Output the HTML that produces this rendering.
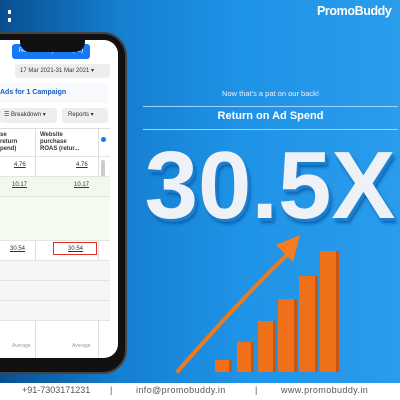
<!DOCTYPE html>
<html><head><style>
*{margin:0;padding:0;box-sizing:border-box}
body{width:400px;height:400px;overflow:hidden;position:relative;font-family:"Liberation Sans",sans-serif;background:linear-gradient(90deg,#0a4f8f 0%,#157fd0 30%,#1f93e6 60%,#2a9cec 100%)}
.abs{position:absolute}
.phone{left:-30px;top:32px;width:157px;height:342px;background:#111;border-radius:24px;border:2px solid #444}
.screen{left:0;top:40px;width:118px;height:318px;background:#fff;border-radius:0 14px 14px 0;overflow:hidden;font-size:6px;color:#333}
.notch{left:20px;top:38px;width:65px;height:14px;background:#111;border-radius:0 0 10px 10px}
.row{position:absolute;left:0;width:110px;border-bottom:1px solid #e4e4e4}
.f{position:absolute;font-size:9px;color:#555}
</style></head><body>
<div class="abs" style="left:8px;top:10px;width:3px;height:12px;border-left:3px dotted #fff"></div>
<div class="abs phone"></div>
<div class="abs screen">
 <div class="abs" style="left:12px;top:4px;width:78px;height:15px;background:#1877f2;border-radius:3px;color:#fff;font-size:6px;text-align:center;line-height:15px">Review and publish (12)</div>
 <div class="abs" style="left:15px;top:24px;width:95px;height:14px;background:#eee;border-radius:3px;font-size:6px;line-height:14px;padding-left:5px">17 Mar 2021-31 Mar 2021 ▾</div>
 <div class="abs" style="left:0;top:43px;width:108px;height:20px;background:#f7f9fc;color:#1a5bb8;font-weight:bold;font-size:7px;line-height:20px">Ads for 1 Campaign</div>
 <div class="abs" style="left:0;top:68px;width:57px;height:15px;background:#eee;border-radius:3px;line-height:15px;padding-left:4px">☰ Breakdown ▾</div>
 <div class="abs" style="left:62px;top:68px;width:46px;height:15px;background:#eee;border-radius:3px;line-height:15px;padding-left:6px">Reports ▾</div>
 <div class="row" style="top:88px;height:29px;border-top:1px solid #ddd"></div>
 <div class="abs" style="left:0;top:92px;font-weight:bold;line-height:7px">se<br>return<br>pend)</div>
 <div class="abs" style="left:40px;top:92px;font-weight:bold;line-height:7px">Website<br>purchase<br>ROAS (retur...</div>
 <div class="abs" style="left:35px;top:88px;width:1px;height:232px;background:#ddd"></div>
 <div class="abs" style="left:98px;top:88px;width:1px;height:232px;background:#ddd"></div>
 <div class="abs" style="left:101px;top:97px;width:5px;height:5px;border-radius:50%;background:#1877f2"></div>
 <div class="abs" style="left:101px;top:120px;width:4px;height:70px;background:#ccc;border-radius:2px"></div>
 <div class="row" style="top:117px;height:20px"></div>
 <div class="row" style="top:137px;height:20px;background:#f3f8ec"></div>
 <div class="row" style="top:157px;height:44px;background:#f5fbef"></div>
 <div class="row" style="top:201px;height:20px"></div>
 <div class="row" style="top:221px;height:20px;background:#f6f6f6"></div>
 <div class="row" style="top:241px;height:20px;background:#f6f6f6"></div>
 <div class="row" style="top:261px;height:20px;background:#f6f6f6"></div>
 <div class="abs" style="left:14px;top:122px;text-decoration:underline">4.76</div>
 <div class="abs" style="left:76px;top:122px;text-decoration:underline">4.76</div>
 <div class="abs" style="left:12px;top:142px;text-decoration:underline">10.17</div>
 <div class="abs" style="left:74px;top:142px;text-decoration:underline">10.17</div>
 <div class="abs" style="left:10px;top:206px;text-decoration:underline">30.54</div>
 <div class="abs" style="left:53px;top:202px;width:44px;height:13px;border:1px solid #e0302a"></div>
 <div class="abs" style="left:68px;top:206px;text-decoration:underline">30.54</div>
 <div class="abs" style="left:12px;top:303px;color:#999;font-size:5px">Average</div>
 <div class="abs" style="left:72px;top:303px;color:#999;font-size:5px">Average</div>
</div>
<div class="abs notch"></div>
<div class="abs" style="left:317px;top:4px;color:#fff;font-weight:bold;font-size:12.5px;letter-spacing:-0.4px">PromoBuddy</div>
<div class="abs" style="left:143px;top:89px;width:255px;text-align:center;color:#eaf4ff;font-size:7.5px">Now that's a pat on our back!</div>
<div class="abs" style="left:143px;top:106px;width:255px;height:1px;background:#9fd3ff"></div>
<div class="abs" style="left:143px;top:110px;width:255px;text-align:center;color:#fff;font-size:11px;font-weight:bold">Return on Ad Spend</div>
<div class="abs" style="left:143px;top:129px;width:255px;height:1px;background:#9fd3ff"></div>
<div class="abs" style="left:140px;top:138px;width:260px;text-align:center;color:#eef1f6;font-size:96px;font-weight:bold;letter-spacing:0;line-height:96px;text-shadow:2px 3px 0 #1a7fd0,3px 5px 3px #0d5fa8">30.5X</div>
<svg class="abs" style="left:0;top:0" width="400" height="400">
<path d="M178 371 Q240 300 290 252" stroke="#f07a1a" stroke-width="4" fill="none" stroke-linecap="round"/>
<polygon points="300,235 276,245 293,262" fill="#f57c1f"/>
<g fill="#f0701a">
<rect x="215" y="360" width="17" height="12"/>
<rect x="237" y="342" width="17" height="30"/>
<rect x="258" y="321" width="18" height="51"/>
<rect x="278" y="299" width="19" height="73"/>
<rect x="299" y="276" width="19" height="96"/>
<rect x="320" y="251" width="19" height="121"/>
</g>
<g fill="#c9560f">
<rect x="229" y="360" width="3" height="12"/><rect x="251" y="342" width="3" height="30"/><rect x="273" y="321" width="3" height="51"/><rect x="294" y="299" width="3" height="73"/><rect x="315" y="276" width="3" height="96"/><rect x="336" y="251" width="3" height="121"/>
</g>
</svg>
<div class="abs" style="left:0;top:383px;width:400px;height:17px;background:#fff"></div>
<div class="f" style="left:22px;top:385px">+91-7303171231</div>
<div class="f" style="left:110px;top:385px">|</div>
<div class="f" style="left:136px;top:385px;letter-spacing:0.4px">info@promobuddy.in</div>
<div class="f" style="left:255px;top:385px">|</div>
<div class="f" style="left:281px;top:385px;letter-spacing:0.4px">www.promobuddy.in</div>
</body></html>
